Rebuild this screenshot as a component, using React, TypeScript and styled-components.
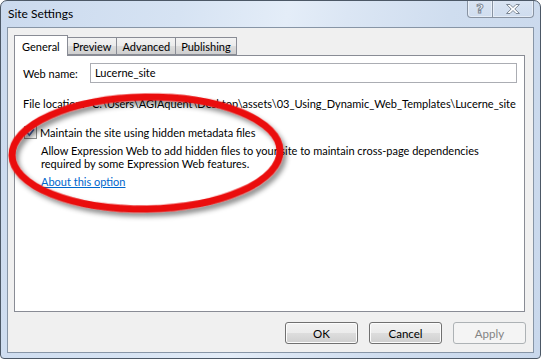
import styled, { createGlobalStyle } from 'styled-components';

const GlobalStyle = createGlobalStyle`
  body {
    margin: 0;
    background: #ffffff;
    font-family: Lato, "Liberation Sans", sans-serif;
    font-size: 11px;
    color: #000000;
  }
`;

const tabs = ['General', 'Preview', 'Advanced', 'Publishing'];

const App = () => {
  return (
    <>
      <GlobalStyle />
      <Window>
        <TitleBar>
          <Title>Site Settings</Title>
          <CaptionButtons>
            <CaptionButton $width={26} $first>
              <HelpGlyph>?</HelpGlyph>
            </CaptionButton>
            <CaptionButton $width={41}>
              <svg width="16" height="12" viewBox="0 0 16 12">
                <path
                  d="M1.5 1.5h3.5l3 3 3-3h3.5l-4.7 4.5 4.7 4.5h-3.5l-3-3-3 3h-3.5l4.7-4.5z"
                  fill="#ffffff"
                  stroke="#7c8794"
                  strokeWidth="1"
                  strokeLinejoin="round"
                />
              </svg>
            </CaptionButton>
          </CaptionButtons>
        </TitleBar>
        <Client>
          <TabStrip>
            {tabs.map((t, i) => (
              <Tab key={t} $active={i === 0}>
                {t}
              </Tab>
            ))}
          </TabStrip>
          <Panel>
            <FieldRow>
              <Label>Web name:</Label>
              <TextBox>Lucerne_site</TextBox>
            </FieldRow>
            <InfoRow>
              <Label>File location:</Label>
              <PathText>
                C:\Users\AGIAquent\Desktop\assets\03_Using_Dynamic_Web_Templates\Lucerne_site
              </PathText>
            </InfoRow>
            <CheckRow>
              <CheckBox>
                <svg width="9" height="9" viewBox="0 0 9 9">
                  <path d="M1.2 4.6l2.2 2.6L7.9 1.2" fill="none" stroke="#4b63a8" strokeWidth="1.7" />
                </svg>
              </CheckBox>
              <span>Maintain the site using hidden metadata files</span>
            </CheckRow>
            <Description>
              Allow Expression Web to add hidden files to your site to maintain cross-page dependencies
              <br />
              required by some Expression Web features.
            </Description>
            <HelpLink href="#">About this option</HelpLink>
          </Panel>
          <Footer>
            <Button>OK</Button>
            <Button>Cancel</Button>
            <Button disabled>Apply</Button>
          </Footer>
        </Client>
        <Annotation width="541" height="359" viewBox="0 0 541 359">
          <defs>
            <filter id="shade" x="-10%" y="-20%" width="130%" height="150%">
              <feDropShadow dx="3" dy="4" stdDeviation="2.5" floodColor="#000" floodOpacity="0.45" />
            </filter>
          </defs>
          <ellipse
            cx="146"
            cy="153"
            rx="134"
            ry="56"
            transform="rotate(-1 146 153)"
            fill="none"
            stroke="#ea0a0a"
            strokeWidth="7"
            filter="url(#shade)"
          />
        </Annotation>
      </Window>
    </>
  );
};

const Window = styled.div`
  position: relative;
  box-sizing: border-box;
  width: 541px;
  height: 359px;
  display: flex;
  flex-direction: column;
  border: 1px solid #4c5866;
  border-radius: 7px 7px 4px 4px;
  background: linear-gradient(
    100deg,
    #cbdaee 0%,
    #d6e3f3 30%,
    #e4edf8 48%,
    #dbe6f4 58%,
    #cfddef 75%,
    #c9d8ec 100%
  );
  overflow: hidden;
`;

const TitleBar = styled.div`
  height: 26px;
  display: flex;
  justify-content: space-between;
  padding-left: 7px;
`;

const Title = styled.div`
  font-size: 12px;
  line-height: 26px;
  color: #000000;
`;

const CaptionButtons = styled.div`
  display: flex;
  margin-top: -1px;
  margin-right: 6px;
  height: 18px;
`;

const CaptionButton = styled.div<{ $width: number; $first?: boolean }>`
  width: ${(p) => p.$width}px;
  box-sizing: border-box;
  display: flex;
  align-items: center;
  justify-content: center;
  border: 1px solid #8893a2;
  border-top: none;
  border-left: ${(p) => (p.$first ? '1px solid #8893a2' : 'none')};
  border-radius: ${(p) => (p.$first ? '0 0 0 4px' : '0 0 4px 0')};
  background: linear-gradient(to bottom, rgba(255, 255, 255, 0.25), rgba(255, 255, 255, 0.05));
  box-shadow: inset 0 0 0 1px rgba(255, 255, 255, 0.45);
`;

const HelpGlyph = styled.span`
  font-family: "DejaVu Sans", sans-serif;
  font-weight: 700;
  font-size: 13px;
  color: #ffffff;
  -webkit-text-stroke: 1px #7c8794;
  line-height: 1;
`;

const Client = styled.div`
  flex: 1;
  display: flex;
  flex-direction: column;
  margin: 0 6px 5px 6px;
  padding-top: 7px;
  border: 1px solid #8795a6;
  background: #f0f0f0;
`;

const TabStrip = styled.div`
  display: flex;
  align-items: flex-end;
  height: 20px;
  padding-left: 6px;
  position: relative;
  z-index: 1;
`;

const Tab = styled.div<{ $active?: boolean }>`
  box-sizing: border-box;
  height: ${(p) => (p.$active ? '21px' : '18px')};
  margin-bottom: ${(p) => (p.$active ? '-1px' : '0')};
  padding: ${(p) => (p.$active ? '3px 7px 0 7px' : '1px 5px 0 5px')};
  border: 1px solid #898c95;
  border-bottom: ${(p) => (p.$active ? 'none' : '1px solid #898c95')};
  margin-left: ${(p) => (p.$active ? '0' : '-1px')};
  background: ${(p) =>
    p.$active ? '#ffffff' : 'linear-gradient(to bottom, #f3f3f3 0%, #ebebeb 50%, #dddddd 51%, #cfcfcf 100%)'};
  font-size: 11px;
  line-height: 15px;
  &:first-child {
    margin-left: 0;
  }
`;

const Panel = styled.div`
  box-sizing: border-box;
  height: 257px;
  margin: 0 8px 0 6px;
  padding: 7px 7px 0 8px;
  border: 1px solid #898c95;
  background: #ffffff;
  display: flex;
  flex-direction: column;
`;

const FieldRow = styled.div`
  display: flex;
  align-items: center;
  height: 20px;
`;

const Label = styled.div`
  width: 67px;
  flex-shrink: 0;
`;

const TextBox = styled.div`
  flex: 1;
  box-sizing: border-box;
  height: 20px;
  padding: 0 4px;
  border: 1px solid #abadb3;
  line-height: 18px;
`;

const InfoRow = styled.div`
  display: flex;
  margin-top: 13px;
  line-height: 15px;
  white-space: nowrap;
`;

const PathText = styled.div`
  padding-left: 2px;
`;

const CheckRow = styled.div`
  display: flex;
  align-items: center;
  gap: 3px;
  margin-top: 14px;
  height: 15px;
  padding-left: 1px;
`;

const CheckBox = styled.div`
  box-sizing: border-box;
  width: 13px;
  height: 13px;
  flex-shrink: 0;
  display: flex;
  align-items: center;
  justify-content: center;
  border: 1px solid #8e8f8f;
  background: linear-gradient(to bottom right, #dcdcdc, #fbfbfb);
  box-shadow: inset 0 0 0 1px #f4f4f4;
`;

const Description = styled.div`
  margin-top: 4px;
  padding-left: 18px;
  line-height: 13px;
  white-space: nowrap;
`;

const HelpLink = styled.a`
  align-self: flex-start;
  margin-top: 5px;
  margin-left: 18px;
  line-height: 14px;
  color: #0066cc;
  text-decoration: underline;
`;

const Footer = styled.div`
  display: flex;
  justify-content: flex-end;
  gap: 11px;
  margin-top: 10px;
  padding-right: 7px;
`;

const Button = styled.button`
  box-sizing: border-box;
  width: 73px;
  height: 22px;
  border: 1px solid #707070;
  border-radius: 3px;
  background: linear-gradient(to bottom, #f2f2f2 0%, #ebebeb 50%, #dddddd 51%, #cfcfcf 100%);
  box-shadow: inset 0 0 0 1px #fcfcfc;
  font-family: Lato, "Liberation Sans", sans-serif;
  font-size: 11.5px;
  color: #000000;
  padding: 0;
  &:disabled {
    border-color: #adb2b5;
    background: #f4f4f4;
    color: #838383;
    box-shadow: none;
  }
`;

const Annotation = styled.svg`
  position: absolute;
  left: -1px;
  top: -1px;
  pointer-events: none;
`;

export default App;
